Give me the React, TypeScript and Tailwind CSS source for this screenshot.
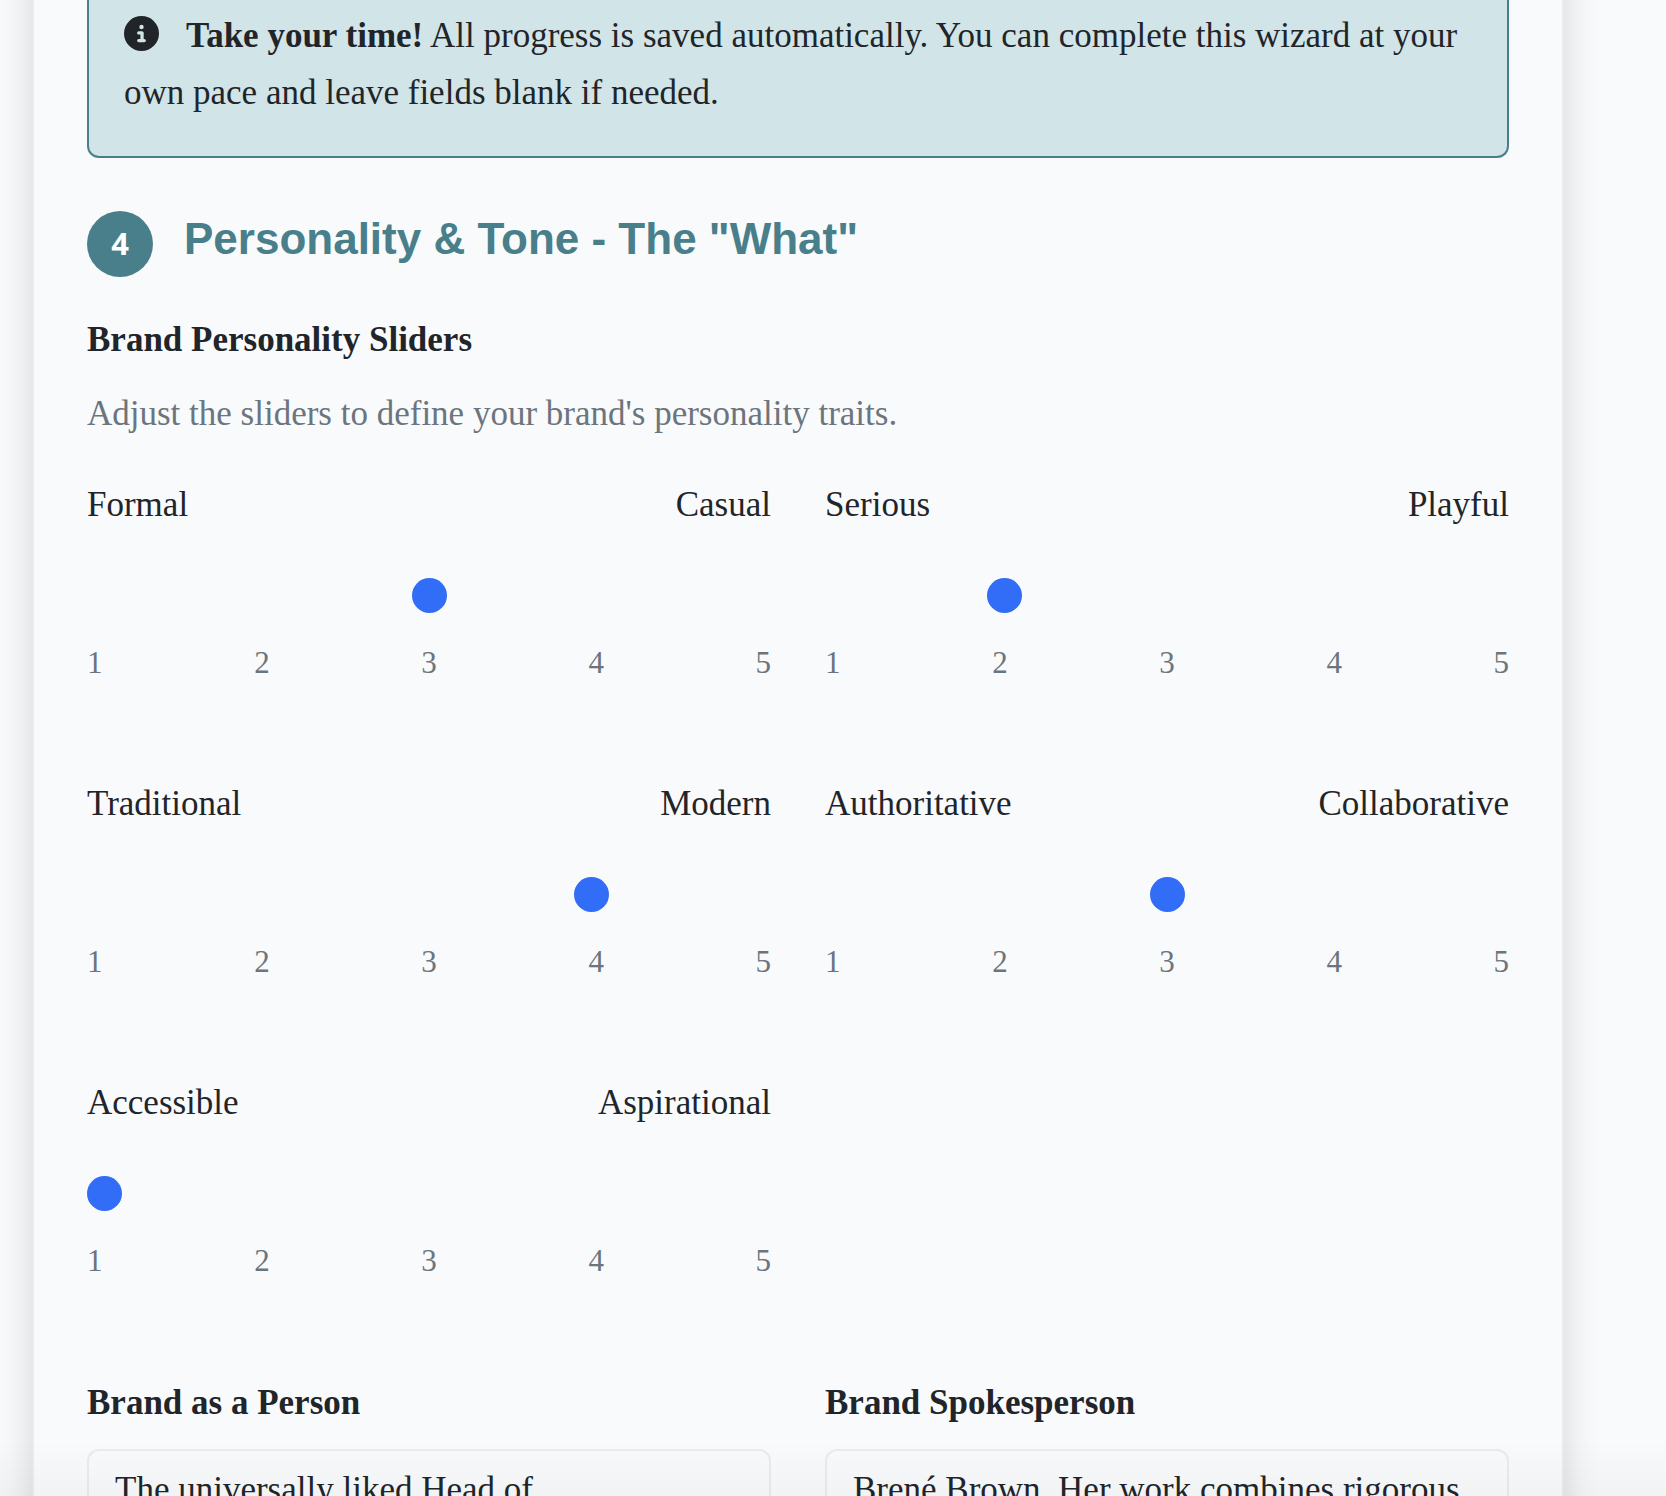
import { useId, useState } from "react";
import { FaCircleInfo } from "react-icons/fa6";

type Trait = { low: string; high: string; initial: number };

const traits: Trait[] = [
  { low: "Formal", high: "Casual", initial: 3 },
  { low: "Serious", high: "Playful", initial: 2 },
  { low: "Traditional", high: "Modern", initial: 4 },
  { low: "Authoritative", high: "Collaborative", initial: 3 },
  { low: "Accessible", high: "Aspirational", initial: 1 },
];

function TraitSlider({ low, high, initial }: Trait) {
  const id = useId();
  const [value, setValue] = useState(initial);
  return (
    <div>
      <label htmlFor={id} className="flex justify-between">
        <span>{low}</span>
        <span>{high}</span>
      </label>
      <input
        id={id}
        type="range"
        min={1}
        max={5}
        value={value}
        onChange={(e) => setValue(Number(e.target.value))}
        className="mt-[45px] mb-[25px] block h-[35px] w-full cursor-pointer appearance-none bg-transparent [&::-webkit-slider-thumb]:size-[35px] [&::-webkit-slider-thumb]:appearance-none [&::-webkit-slider-thumb]:rounded-full [&::-webkit-slider-thumb]:bg-[#316df6]"
      />
      <div className="flex justify-between text-[31px] leading-[50px] text-[#6c757d]">
        {[1, 2, 3, 4, 5].map((n) => (
          <span key={n}>{n}</span>
        ))}
      </div>
    </div>
  );
}

function AnswerField({ label, initial }: { label: string; initial: string }) {
  const id = useId();
  return (
    <div>
      <label htmlFor={id} className="mb-[18px] block font-bold">
        {label}
      </label>
      <textarea
        id={id}
        defaultValue={initial}
        rows={3}
        className="block w-full resize-none overflow-hidden rounded-xl border-2 border-[#e9ebed] bg-transparent px-[26px] py-[13px] leading-[52px] outline-none"
      />
    </div>
  );
}

export default function App() {
  return (
    <div className="relative h-screen overflow-hidden bg-[#f8fafc] pr-[102px] pl-8 font-['Liberation_Serif',serif] text-[35px] leading-[57px] text-[#212529]">
      <main className="-mt-12 min-h-full border-x-2 border-[#e9ebed] bg-[#f8fafc] px-[53px] pt-12 shadow-[0_0_35px_rgba(0,0,0,0.15)]">
        <div className="rounded-b-xl border-2 border-t-0 border-[#497f8a] bg-[#d1e4e7] px-[35px] pt-[7px] pb-[35px]">
          <FaCircleInfo className="mr-[27px] inline-block size-[35px] align-[-4px]" />
          <strong>Take your time!</strong> All progress is saved automatically. You can complete this
          wizard at your own pace and leave fields blank if needed.
        </div>

        <header className="mt-[53px] flex items-center gap-[31px] font-['Liberation_Sans',sans-serif] font-bold">
          <span className="flex size-[66px] items-center justify-center rounded-full bg-[#497f8a] pb-0.5 font-['Noto_Sans',sans-serif] text-[31px] text-white">
            4
          </span>
          <h2 className="pb-2.5 text-[44px] leading-[56px] text-[#497f8a]">
            Personality &amp; Tone - The "What"
          </h2>
        </header>

        <section className="mt-[34px]">
          <h3 className="font-bold">Brand Personality Sliders</h3>
          <p className="mt-[17px] text-[#6c757d]">
            Adjust the sliders to define your brand's personality traits.
          </p>
          <div className="mt-[34px] grid grid-cols-2 gap-x-[54px] gap-y-[87px]">
            {traits.map((t) => (
              <TraitSlider key={t.low} {...t} />
            ))}
          </div>
        </section>

        <section className="mt-[88px] grid grid-cols-2 gap-x-[54px] pb-12">
          <AnswerField label="Brand as a Person" initial="The universally liked Head of" />
          <AnswerField
            label="Brand Spokesperson"
            initial="Brené Brown. Her work combines rigorous"
          />
        </section>
      </main>
      <div className="pointer-events-none absolute inset-x-0 bottom-0 h-14 bg-linear-to-b from-transparent to-black/3" />
    </div>
  );
}
